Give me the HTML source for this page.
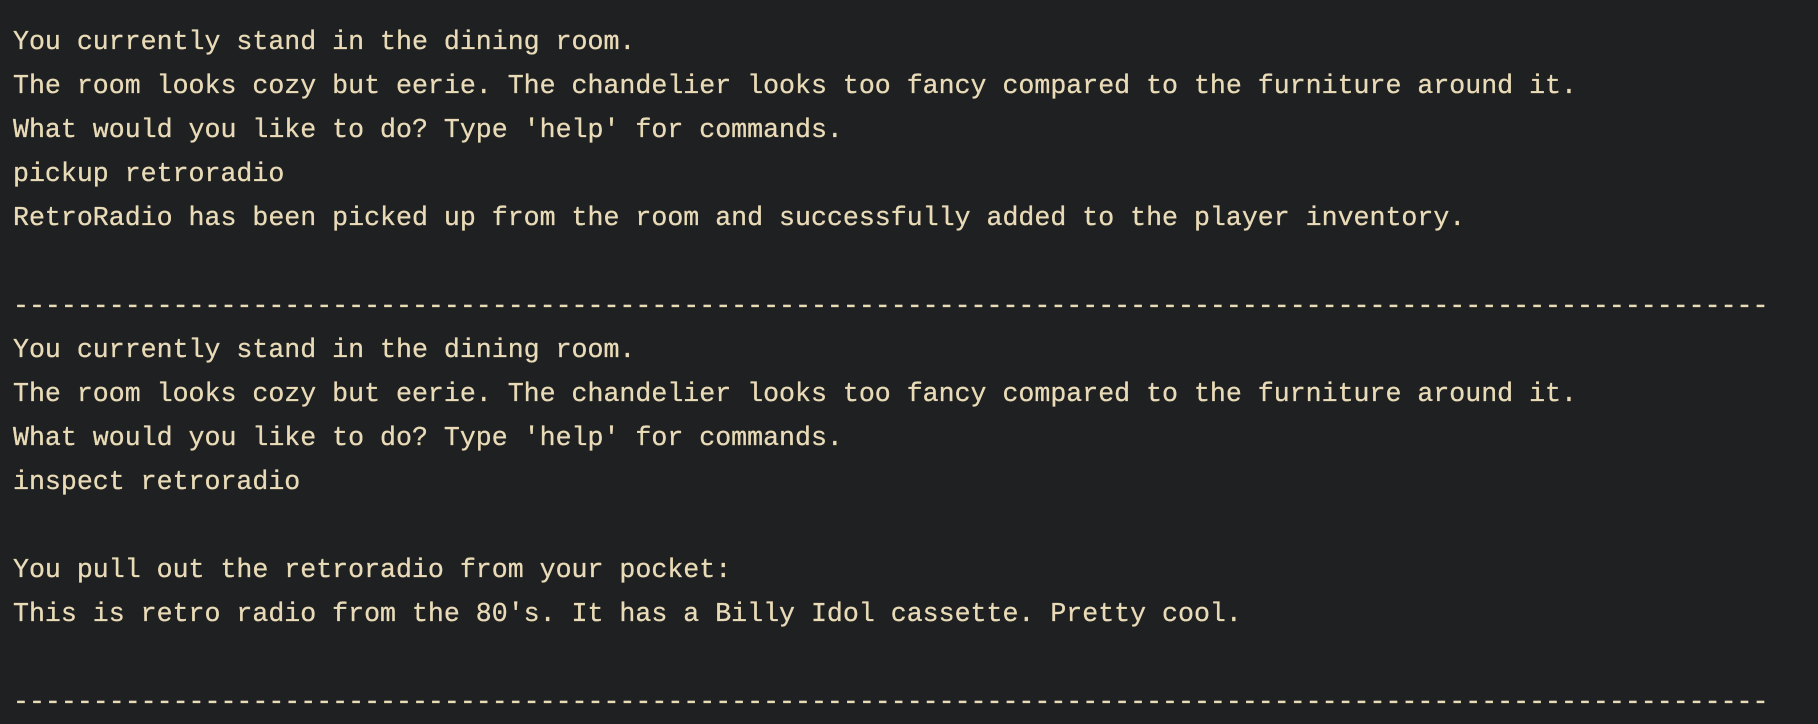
<!DOCTYPE html>
<html><head><meta charset="utf-8"><style>
html,body{margin:0;padding:0;width:1818px;height:710px;overflow:hidden;background:#1e2022;}
pre{margin:0;position:absolute;left:13px;top:20px;font-family:"Liberation Mono","DejaVu Sans Mono",monospace;font-size:26.6px;line-height:44px;color:#e9dbb7;white-space:pre;-webkit-text-stroke:0.3px #e9dbb7;}
</style></head><body><pre>You currently stand in the dining room.
The room looks cozy but eerie. The chandelier looks too fancy compared to the furniture around it.
What would you like to do? Type 'help' for commands.
pickup retroradio
RetroRadio has been picked up from the room and successfully added to the player inventory.

--------------------------------------------------------------------------------------------------------------
You currently stand in the dining room.
The room looks cozy but eerie. The chandelier looks too fancy compared to the furniture around it.
What would you like to do? Type 'help' for commands.
inspect retroradio

You pull out the retroradio from your pocket:
This is retro radio from the 80's. It has a Billy Idol cassette. Pretty cool.

--------------------------------------------------------------------------------------------------------------</pre></body></html>
